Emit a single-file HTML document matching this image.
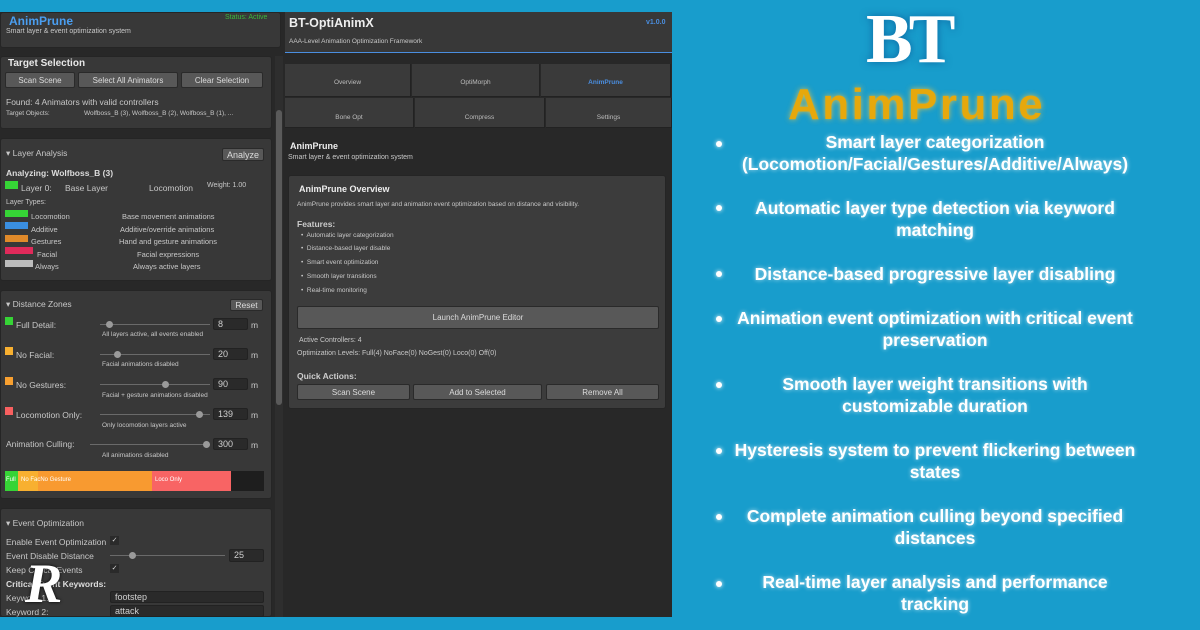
<!DOCTYPE html>
<html><head><meta charset="utf-8"><style>
*{margin:0;padding:0;box-sizing:border-box}
body{width:1200px;height:630px;background:#189dcc;position:relative;overflow:hidden;font-family:"Liberation Sans",sans-serif;}
.a{position:absolute;white-space:nowrap}
.ui{color:#c8c8c8;font-size:8px}
.pan{position:absolute;background:#383838;border:1px solid #252525;border-radius:3px}
.btn{position:absolute;background:#585858;border:1px solid #2a2a2a;border-radius:2px;color:#dcdcdc;font-size:8px;text-align:center}
.sw{position:absolute;width:23px;height:7px}
.fld{position:absolute;background:#2a2a2a;border:1px solid #222;border-radius:2px;color:#d0d0d0;font-size:9px;padding-left:4px}
.trk{position:absolute;height:1px;background:#6a6a6a}
.knob{position:absolute;width:7px;height:7px;border-radius:50%;background:#9a9a9a}
.tab{position:absolute;background:#3a3a3a;border-right:1px solid #222;border-bottom:1px solid #222;color:#bcbcbc;font-size:6.5px;text-align:center}
.bl{position:absolute;left:690px;width:490px;text-align:center;color:#fff;font-weight:bold;font-size:17.5px;line-height:22px;text-shadow:0 0 4px rgba(255,255,255,.7)}
.dot{position:absolute;width:6px;height:6px;border-radius:50%;background:#fff;box-shadow:0 0 4px #fff}
</style></head><body>
<div style="position:absolute;left:0;top:12px;width:672px;height:605px;background:#282828"></div>
<div class="pan" style="left:0;top:12px;width:281px;height:36px;background:#383838"></div>
<div class="a" style="left:9px;top:14px;color:#4a9ef0;font-size:12px;font-weight:bold">AnimPrune</div>
<div class="a ui" style="left:6px;top:28px;font-size:7px">Smart layer &amp; event optimization system</div>
<div class="a" style="left:225px;top:14px;color:#3cb83c;font-size:7px">Status: Active</div>
<div style="position:absolute;left:275px;top:56px;width:8px;height:561px;background:#2e2e2e"></div>
<div style="position:absolute;left:276px;top:110px;width:6px;height:295px;background:#5a5a5a;border-radius:3px"></div>
<div class="pan" style="left:0;top:56px;width:272px;height:73px"></div>
<div class="a" style="left:8px;top:58px;color:#e8e8e8;font-size:10px;font-weight:bold">Target Selection</div>
<div class="btn" style="left:5px;top:72px;width:70px;height:16px;line-height:15px">Scan Scene</div>
<div class="btn" style="left:78px;top:72px;width:100px;height:16px;line-height:15px">Select All Animators</div>
<div class="btn" style="left:181px;top:72px;width:82px;height:16px;line-height:15px">Clear Selection</div>
<div class="a ui" style="left:6px;top:97px;font-size:8.5px">Found: 4 Animators with valid controllers</div>
<div class="a ui" style="left:6px;top:110px;font-size:6.5px">Target Objects:</div>
<div class="a ui" style="left:84px;top:110px;font-size:6.5px">Wolfboss_B (3), Wolfboss_B (2), Wolfboss_B (1), ...</div>
<div class="pan" style="left:0;top:138px;width:272px;height:143px"></div>
<div class="a ui" style="left:6px;top:148px;font-size:8.5px">▾ Layer Analysis</div>
<div class="btn" style="left:222px;top:148px;width:42px;height:13px;line-height:12px;font-size:9px">Analyze</div>
<div class="a" style="left:6px;top:168px;color:#ddd;font-size:8.5px;font-weight:bold">Analyzing: Wolfboss_B (3)</div>
<div class="sw" style="left:5px;top:181px;width:13px;height:8px;background:#36d436"></div>
<div class="a ui" style="left:21px;top:183px;font-size:8.5px">Layer 0:</div>
<div class="a ui" style="left:65px;top:183px;font-size:8.5px">Base Layer</div>
<div class="a ui" style="left:149px;top:183px;font-size:8.5px">Locomotion</div>
<div class="a ui" style="left:207px;top:182px;font-size:7px">Weight: 1.00</div>
<div class="a ui" style="left:6px;top:199px;font-size:7px">Layer Types:</div>
<div class="sw" style="left:5px;top:210px;background:#36d436"></div><div class="a ui" style="left:31px;top:212px;font-size:7.5px">Locomotion</div><div class="a ui" style="left:122px;top:212px;font-size:7.5px">Base movement animations</div>
<div class="sw" style="left:5px;top:222px;background:#3a8ee0"></div><div class="a ui" style="left:31px;top:225px;font-size:7.5px">Additive</div><div class="a ui" style="left:120px;top:225px;font-size:7.5px">Additive/override animations</div>
<div class="sw" style="left:5px;top:235px;background:#e08a2a"></div><div class="a ui" style="left:31px;top:237px;font-size:7.5px">Gestures</div><div class="a ui" style="left:119px;top:237px;font-size:7.5px">Hand and gesture animations</div>
<div class="sw" style="left:5px;top:247px;width:28px;background:#e02a5a"></div><div class="a ui" style="left:37px;top:250px;font-size:7.5px">Facial</div><div class="a ui" style="left:137px;top:250px;font-size:7.5px">Facial expressions</div>
<div class="sw" style="left:5px;top:260px;width:28px;background:#bcbcbc"></div><div class="a ui" style="left:35px;top:262px;font-size:7.5px">Always</div><div class="a ui" style="left:133px;top:262px;font-size:7.5px">Always active layers</div>
<div class="pan" style="left:0;top:290px;width:272px;height:209px"></div>
<div class="a ui" style="left:6px;top:299px;font-size:8.5px">▾ Distance Zones</div>
<div class="btn" style="left:230px;top:299px;width:33px;height:12px;line-height:11px;font-size:8.5px">Reset</div>
<div class="sw" style="left:5px;top:317px;width:8px;height:8px;background:#36d436"></div>
<div class="a ui" style="left:16px;top:320px;font-size:8.5px">Full Detail:</div>
<div class="trk" style="left:100px;top:324px;width:110px"></div><div class="knob" style="left:106px;top:321px"></div>
<div class="fld" style="left:213px;top:318px;width:35px;height:12px">8</div><div class="a ui" style="left:251px;top:320px;font-size:8.5px">m</div>
<div class="a ui" style="left:102px;top:331px;font-size:6.5px">All layers active, all events enabled</div>
<div class="sw" style="left:5px;top:347px;width:8px;height:8px;background:#f8b030"></div>
<div class="a ui" style="left:16px;top:350px;font-size:8.5px">No Facial:</div>
<div class="trk" style="left:100px;top:354px;width:110px"></div><div class="knob" style="left:114px;top:351px"></div>
<div class="fld" style="left:213px;top:348px;width:35px;height:12px">20</div><div class="a ui" style="left:251px;top:350px;font-size:8.5px">m</div>
<div class="a ui" style="left:102px;top:361px;font-size:6.5px">Facial animations disabled</div>
<div class="sw" style="left:5px;top:377px;width:8px;height:8px;background:#f8a030"></div>
<div class="a ui" style="left:16px;top:380px;font-size:8.5px">No Gestures:</div>
<div class="trk" style="left:100px;top:384px;width:110px"></div><div class="knob" style="left:162px;top:381px"></div>
<div class="fld" style="left:213px;top:378px;width:35px;height:12px">90</div><div class="a ui" style="left:251px;top:380px;font-size:8.5px">m</div>
<div class="a ui" style="left:102px;top:392px;font-size:6.5px">Facial + gesture animations disabled</div>
<div class="sw" style="left:5px;top:407px;width:8px;height:8px;background:#f86060"></div>
<div class="a ui" style="left:16px;top:410px;font-size:8.5px">Locomotion Only:</div>
<div class="trk" style="left:100px;top:414px;width:110px"></div><div class="knob" style="left:196px;top:411px"></div>
<div class="fld" style="left:213px;top:408px;width:35px;height:12px">139</div><div class="a ui" style="left:251px;top:410px;font-size:8.5px">m</div>
<div class="a ui" style="left:102px;top:422px;font-size:6.5px">Only locomotion layers active</div>
<div class="a ui" style="left:6px;top:439px;font-size:8.5px">Animation Culling:</div>
<div class="trk" style="left:90px;top:444px;width:120px"></div><div class="knob" style="left:203px;top:441px"></div>
<div class="fld" style="left:213px;top:438px;width:35px;height:12px">300</div><div class="a ui" style="left:251px;top:440px;font-size:8.5px">m</div>
<div class="a ui" style="left:102px;top:452px;font-size:6.5px">All animations disabled</div>
<div style="position:absolute;left:5px;top:471px;width:259px;height:20px;background:#1e1e1e"></div>
<div style="position:absolute;left:5px;top:471px;width:13px;height:20px;background:#36d436"></div>
<div style="position:absolute;left:18px;top:471px;width:20px;height:20px;background:#f8b030"></div>
<div style="position:absolute;left:38px;top:471px;width:114px;height:20px;background:#f89a30"></div>
<div style="position:absolute;left:152px;top:471px;width:79px;height:20px;background:#f86464"></div>
<div class="a" style="left:6px;top:477px;color:#fff;font-size:6px">Full</div>
<div class="a" style="left:21px;top:477px;color:#fff;font-size:6px">No FacNo Gesture</div>
<div class="a" style="left:155px;top:477px;color:#fff;font-size:6px">Loco Only</div>
<div class="pan" style="left:0;top:508px;width:272px;height:109px"></div>
<div class="a ui" style="left:6px;top:518px;font-size:8.5px">▾ Event Optimization</div>
<div class="a ui" style="left:6px;top:537px;font-size:8.5px">Enable Event Optimization</div>
<div class="a" style="left:110px;top:536px;width:9px;height:9px;background:#2a2a2a;color:#ddd;font-size:7px;text-align:center">✓</div>
<div class="a ui" style="left:6px;top:551px;font-size:8.5px">Event Disable Distance</div>
<div class="trk" style="left:110px;top:555px;width:115px"></div><div class="knob" style="left:129px;top:552px"></div>
<div class="fld" style="left:229px;top:549px;width:35px;height:13px">25</div>
<div class="a ui" style="left:6px;top:565px;font-size:8.5px">Keep Critical Events</div>
<div class="a" style="left:110px;top:564px;width:9px;height:9px;background:#2a2a2a;color:#ddd;font-size:7px;text-align:center">✓</div>
<div class="a" style="left:6px;top:579px;color:#ddd;font-size:8.5px;font-weight:bold">Critical Event Keywords:</div>
<div class="a ui" style="left:6px;top:593px;font-size:8.5px">Keyword 1:</div>
<div class="fld" style="left:110px;top:591px;width:154px;height:12px">footstep</div>
<div class="a ui" style="left:6px;top:607px;font-size:8.5px">Keyword 2:</div>
<div class="fld" style="left:110px;top:605px;width:154px;height:12px">attack</div>
<div class="a" style="left:25px;top:552px;color:#fff;font-family:'Liberation Serif',serif;font-style:italic;font-weight:bold;font-size:56px;text-shadow:0 0 3px #000">R</div>
<div style="position:absolute;left:285px;top:12px;width:387px;height:41px;background:#383838;border-bottom:1px solid #4a8ee0"></div>
<div class="a" style="left:289px;top:16px;color:#eee;font-size:12.5px;font-weight:bold">BT-OptiAnimX</div>
<div class="a ui" style="left:289px;top:38px;font-size:6.5px">AAA-Level Animation Optimization Framework</div>
<div class="a" style="left:646px;top:19px;color:#4a8ee0;font-size:7px;font-weight:bold">v1.0.0</div>
<div class="tab" style="left:285px;top:64px;width:126px;height:33px;line-height:38px">Overview</div>
<div class="tab" style="left:412px;top:64px;width:128px;height:33px;line-height:38px">OptiMorph</div>
<div class="tab" style="left:541px;top:64px;width:130px;height:33px;line-height:38px;color:#4a8ee0;font-weight:bold">AnimPrune</div>
<div class="tab" style="left:285px;top:98px;width:129px;height:30px;line-height:40px">Bone Opt</div>
<div class="tab" style="left:415px;top:98px;width:130px;height:30px;line-height:40px">Compress</div>
<div class="tab" style="left:546px;top:98px;width:126px;height:30px;line-height:40px">Settings</div>
<div class="a" style="left:290px;top:141px;color:#eee;font-size:9px;font-weight:bold">AnimPrune</div>
<div class="a ui" style="left:288px;top:154px;font-size:7px">Smart layer &amp; event optimization system</div>
<div class="pan" style="left:288px;top:175px;width:378px;height:234px;background:#3c3c3c"></div>
<div class="a" style="left:299px;top:184px;color:#eee;font-size:9px;font-weight:bold">AnimPrune Overview</div>
<div class="a ui" style="left:297px;top:201px;font-size:6.5px">AnimPrune provides smart layer and animation event optimization based on distance and visibility.</div>
<div class="a" style="left:297px;top:219px;color:#ccc;font-size:8.5px;font-weight:bold">Features:</div>
<div class="a ui" style="left:301px;top:232px;font-size:6.5px">•&nbsp; Automatic layer categorization</div>
<div class="a ui" style="left:301px;top:245px;font-size:6.5px">•&nbsp; Distance-based layer disable</div>
<div class="a ui" style="left:301px;top:259px;font-size:6.5px">•&nbsp; Smart event optimization</div>
<div class="a ui" style="left:301px;top:273px;font-size:6.5px">•&nbsp; Smooth layer transitions</div>
<div class="a ui" style="left:301px;top:287px;font-size:6.5px">•&nbsp; Real-time monitoring</div>
<div class="btn" style="left:297px;top:306px;width:362px;height:23px;line-height:22px">Launch AnimPrune Editor</div>
<div class="a ui" style="left:299px;top:337px;font-size:7px">Active Controllers: 4</div>
<div class="a ui" style="left:297px;top:350px;font-size:7px">Optimization Levels: Full(4) NoFace(0) NoGest(0) Loco(0) Off(0)</div>
<div class="a" style="left:297px;top:371px;color:#ccc;font-size:8.5px;font-weight:bold">Quick Actions:</div>
<div class="btn" style="left:297px;top:384px;width:113px;height:16px;line-height:15px">Scan Scene</div>
<div class="btn" style="left:413px;top:384px;width:129px;height:16px;line-height:15px">Add to Selected</div>
<div class="btn" style="left:546px;top:384px;width:113px;height:16px;line-height:15px">Remove All</div>
<div class="a" style="left:866px;top:2px;color:#fff;font-family:'Liberation Serif',serif;font-weight:bold;font-size:70px;line-height:76px;letter-spacing:-4px;text-shadow:0 0 8px rgba(0,50,120,.5)">BT</div>
<div class="a" style="left:788px;top:80px;color:#e6a80c;font-family:'Liberation Sans',sans-serif;font-weight:bold;font-size:44px;letter-spacing:2.5px;line-height:50px;text-shadow:0 0 6px rgba(255,200,60,.8)">AnimPrune</div>
<div class="dot" style="left:716px;top:141px"></div>
<div class="bl" style="top:131px">Smart layer categorization<br>(Locomotion/Facial/Gestures/Additive/Always)</div>
<div class="dot" style="left:716px;top:205px"></div>
<div class="bl" style="top:197px">Automatic layer type detection via keyword<br>matching</div>
<div class="dot" style="left:716px;top:271px"></div>
<div class="bl" style="top:263px">Distance-based progressive layer disabling</div>
<div class="dot" style="left:716px;top:316px"></div>
<div class="bl" style="top:307px">Animation event optimization with critical event<br>preservation</div>
<div class="dot" style="left:716px;top:382px"></div>
<div class="bl" style="top:373px">Smooth layer weight transitions with<br>customizable duration</div>
<div class="dot" style="left:716px;top:448px"></div>
<div class="bl" style="top:439px">Hysteresis system to prevent flickering between<br>states</div>
<div class="dot" style="left:716px;top:514px"></div>
<div class="bl" style="top:505px">Complete animation culling beyond specified<br>distances</div>
<div class="dot" style="left:716px;top:581px"></div>
<div class="bl" style="top:571px">Real-time layer analysis and performance<br>tracking</div>
</body></html>
